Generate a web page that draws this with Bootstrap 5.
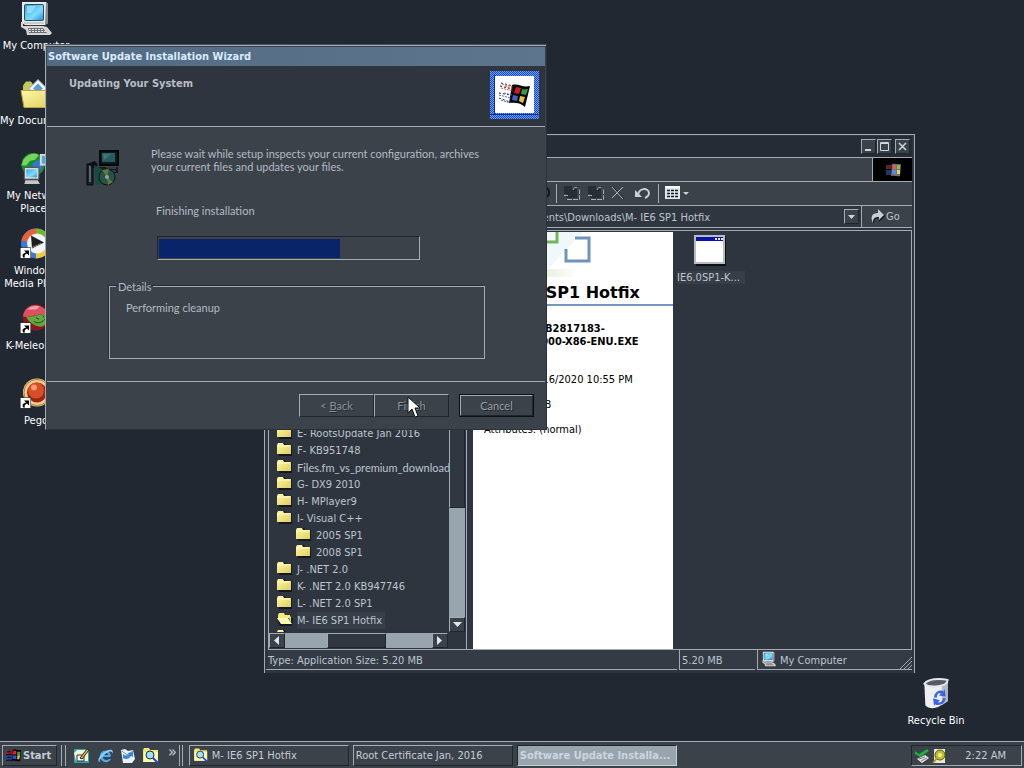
<!DOCTYPE html>
<html lang="en">
<head>
<meta charset="utf-8">
<meta name="viewport" content="width=device-width, initial-scale=1">
<title>Desktop</title>
<link href="https://cdn.jsdelivr.net/npm/bootstrap@5.3.0/dist/css/bootstrap.min.css" rel="stylesheet">
<style>
:root{--desk:#212832;--face:#3b424a;--pane:#2f353f;--hi:#a3abb4;--lo:#20262f;--ink:#bcc5cf;--track:#98a4ae}
body{font:11px/13px "DejaVu Sans Condensed","DejaVu Sans",sans-serif;color:var(--ink);background:var(--desk)}
svg{display:block;flex:none}
a{color:inherit;text-decoration:none}
button{font:inherit;color:inherit;border-radius:0}
.desktop{background:var(--desk)}
.shortcut{position:absolute;width:72px;color:#fff;text-align:center;white-space:nowrap}
.shortcut svg{margin:0 auto 4px}
.win{position:absolute;white-space:nowrap}
.raised{background:var(--face);border:1px solid;border-color:var(--hi) var(--lo) var(--lo) var(--hi);padding:0}
.sunken{border:1px solid;border-color:var(--lo) var(--hi) var(--hi) var(--lo)}
.rule-v{width:1px;align-self:stretch;background:var(--hi)}

/* file manager */
.explorer{left:264px;top:134px;width:651px;height:539px;background:#2e353e;border:1px solid var(--hi);border-bottom:0;padding:1px 2px 3px 3px}
.bar{background:var(--face);border-bottom:1px solid var(--hi);height:24px}
.titlebar{height:22px;background:#252c36;padding-right:2px}
.titlebar button{width:15px;height:15px}
.address{height:22px}
.address input{background:#30363f;border:0;color:inherit;font:inherit;text-align:right;padding:2px 134px 0 4px;min-width:0;height:21px}
.panes{border-top:1px solid var(--hi);border-right:1px solid var(--hi);border-bottom:1px solid var(--hi);background:var(--pane);margin-top:2px;padding-top:1px}
.folders{width:199px;border:1px solid var(--hi);border-width:0 1px 0 1px;margin-right:6px}
.tree{padding:193px 0 0 8px;margin:0;list-style:none}
.tree li{height:17px;line-height:17px;display:flex;gap:4px}
.tree .deep{margin-left:19px}
.tree .long{font-family:Lato,sans-serif}
.tree .picked span{background:#373e48;padding-right:3px;margin-right:auto}
.vscroll{width:16px;margin:0 1px 1px 0}
.track{background:var(--track)}
.sbtn{width:16px;height:15px;flex:none;display:flex;align-items:center;justify-content:center}
.preview{width:200px;background:#fff;color:#000;padding:52px 0 0 11px}
.preview svg{position:absolute;left:0;top:0}
.preview h1{font:bold 16px/18px "DejaVu Sans",sans-serif;margin:0 0 0 -11px;padding:0 0 2px 11px;border-bottom:2px solid #7397bd}
.preview p{margin:0 0 12px}
.item{width:74px;padding-top:3px}
.item svg{margin:0 auto 4px 21px}
.item span{background:#373e48;padding-right:5px}
.status{height:20px;background:#343b44;line-height:22px}
.status>div{border-bottom:1px solid var(--hi);padding-left:2px;height:20px}
.status>div+div{border-left:1px solid var(--hi);margin-left:2px}

/* wizard */
.wizard{left:45px;top:44px;width:502px;height:386px;background:var(--face);border:1px solid #2b313a;border-top-color:#4a525c;border-left-color:var(--hi);box-shadow:inset 0 1px var(--hi);padding:2px 1px 0;color:#b3bbc5;font-family:Lato,sans-serif}
.wtitle{height:19px;background:linear-gradient(90deg,#526a82,#5d768e);color:#d9ebff;padding:3px 0 0 1px;font:bold 11px/13px "DejaVu Sans Condensed",sans-serif}
.whead{height:61px;background:var(--pane);border-bottom:1px solid var(--hi)}
.whead h2{font:bold 11px/13px "DejaVu Sans Condensed",sans-serif;margin:11px 0 0 22px;color:#b8bdc4}
.wbody{height:255px;border-bottom:1px solid var(--hi)}
.meter{width:263px;height:24px;padding:2px 1px 1px;background:var(--face)}
.meter div{background:#0a246a;height:19px}
.wbody fieldset{border:1px solid var(--hi);box-shadow:-1px -1px #282e37;height:79px;margin:20px 0 0 62px;width:376px}
.wbody legend{float:none;width:auto;font:inherit;margin:0 0 0 6px;padding:0 2px;line-height:13px}
.wbtn{width:75px;height:23px}
.wbtn:disabled{color:#8a929b;text-shadow:1px 1px #242a32}
.default{outline:1px solid #0c1016;height:21px;width:73px;text-shadow:1px 1px #242a32;color:#98a0aa}
.pointer{position:absolute;left:361px;top:351px}

/* taskbar */
.taskbar{background:var(--face);border-top:1px solid var(--hi);height:27px;padding:3px 2px 2px;color:#c5ced7}
.start{width:55px;font-weight:bold}
.task{width:160px;text-align:left;white-space:nowrap;overflow:hidden}
.task.on{background:var(--track);border-color:var(--lo) #c5ccd3 #c5ccd3 var(--lo);font-weight:bold;color:#ccd6de}
.tray{width:111px}
</style>
</head>
<body>
<svg width="0" height="0" class="position-absolute" aria-hidden="true">
  <defs>
    <linearGradient id="scr" x1="0" y1="0" x2="1" y2="1"><stop offset="0" stop-color="#37a5e8"/><stop offset=".6" stop-color="#7fdcff"/><stop offset="1" stop-color="#2b8fd8"/></linearGradient>
    <linearGradient id="fold" x1="0" y1="0" x2="1" y2="1"><stop offset="0" stop-color="#fff9a8"/><stop offset="1" stop-color="#dfcf5e"/></linearGradient>
    <symbol id="pc" viewBox="0 0 32 33"><path d="M2 0h24l2 2v19l-3 2H5l-3-2z" fill="#ecebe8"/><path d="M26 0l2 2v19l-3 2z" fill="#858b92"/><rect x="4" y="2" width="20" height="17" rx="2" fill="#24506e"/><rect x="5" y="3" width="18" height="15" rx="1" fill="url(#scr)"/><path d="M7 4h9l-5 7H7z" fill="#b4eeff" opacity=".6"/><path d="M4 21h20" stroke="#aaa9a6"/><path d="M8 23h12l3 2H6z" fill="#3c4148"/><path d="M1 20h2v4h20l4 1 5 6-2 2H7l-1-5-5-3z" fill="#d6d5d3"/><path d="M8 26h15l4 5H9z" fill="#6d6e70"/><path d="M9 27.500h15M9 29.500h17" stroke="#e4e4e4" stroke-width="1" stroke-dasharray="2 1"/></symbol>
    <symbol id="docs" viewBox="0 0 32 32"><path d="M3 8l3-4h5l2 3v12H3z" fill="#c6c95a"/><path d="M9 11L18 2l9 9-9 9z" fill="#f4f8fd" stroke="#8aa0b8"/><path d="M13 11l5-5 5 5-5 4z" fill="#5c9fd4"/><path d="M1 13h30l-3 17H4z" fill="url(#fold)" stroke="#b9a544"/></symbol>
    <symbol id="net" viewBox="0 0 32 34"><circle cx="13" cy="13" r="12" fill="#1c8b38"/><path d="M3 8c5-7 12-7 16-5l-4 5-5 1-4 5H1z" fill="#76d35c"/><path d="M12 12l7-4 5 5-5 8-4-1z" fill="#3676c9"/><path d="M20 2h11v12H20z" fill="#d8d8d8"/><path d="M22 4h8v8h-8z" fill="#4da6de"/><path d="M4 16h15v12H4z" fill="#dadada" stroke="#555"/><path d="M6 18h11v8H6z" fill="url(#scr)"/><path d="M5 29h13l2 4H4z" fill="#c6c6c6"/></symbol>
    <symbol id="arrowbox" viewBox="0 0 11 11"><path d="M0 0h11v11H0z" fill="#fff" stroke="#000"/><path d="M3 10c-1-3 0-4 3-5L4 3h5v5L7 6c-2 1-3 2-2 4z" fill="#000"/></symbol>
    <symbol id="wmp" viewBox="0 0 32 32"><circle cx="16" cy="16" r="15" fill="#3f78d8"/><path d="M16 16V1a15 15 0 0 0-14.500 12z" fill="#e9603c"/><path d="M16 16V1a15 15 0 0 1 15 15z" fill="#70b92e"/><path d="M16 16h15a15 15 0 0 1-15 15z" fill="#f4c63a"/><circle cx="17" cy="16" r="10" fill="#f3f5f8"/><path d="M11 8l13 7-12 6z" fill="#1e1e1e"/><path d="M12 20l9-4" stroke="#888"/><use href="#arrowbox" x="0" y="20" width="11" height="11"/></symbol>
    <symbol id="kmel" viewBox="0 0 32 32"><circle cx="16" cy="15" r="13" fill="#8c1520"/><path d="M3 14C4 5 12 1 18 3s11 6 11 10c-9-4-18 3-26 1z" fill="#dc5162"/><path d="M7 7c4-4 9-4 13-3l-4 3z" fill="#f3a0aa"/><path d="M6 14c9 1 15-4 24-2-1 8-6 13-11 12S8 19 6 14z" fill="#63a83c"/><path d="M14 19c4 3 9 1 12-4M16 15l3 2M23 13l1 2" stroke="#1f4c18" fill="none"/><use href="#arrowbox" x="0" y="20" width="11" height="11"/></symbol>
    <symbol id="peg" viewBox="0 0 32 32"><circle cx="17" cy="15" r="14" fill="#f0cf92"/><circle cx="17" cy="15" r="13" fill="none" stroke="#b67b3c"/><circle cx="17" cy="15" r="10" fill="#9d2411"/><circle cx="16" cy="13" r="8" fill="#d84e26"/><circle cx="14" cy="10" r="3" fill="#f59a72"/><use href="#arrowbox" x="0" y="20" width="11" height="11"/></symbol>
    <symbol id="bin" viewBox="0 0 32 34"><path d="M4 7l1 22c3 4 10 4 15 1l8-5V5z" fill="#eeeff1"/><path d="M22 9l6-5v21l-6 4z" fill="#b4b8c2"/><path d="M4 7C8 2 19 1 28 3c0 7-19 9-24 4z" fill="#565b66" stroke="#e4e6ea" stroke-width="2"/><path d="M14 21c0-6 7-9 10-6l1-3 1 8-7-1 2-2c-3-1-4 1-4 4zM26 22c-1 7-8 8-11 6l-1 2-1-8 7 2-2 2c3 1 5-1 5-4z" fill="#3b63e4"/></symbol>
    <symbol id="fd" viewBox="0 0 16 16"><path d="M2 3l1-2h5l1 2h6v11H2z" fill="#15181c"/><path d="M0 3l1-2h5l1 2h7v9H0z" fill="url(#fold)"/><path d="M0 4h13" stroke="#fffcc8"/></symbol>
    <symbol id="fo" viewBox="0 0 16 16"><path d="M1 3l1-2h5l1 2h5v3h3l-1 8H3L1 10z" fill="#15181c"/><path d="M1 3l1-2h5l1 2h5v3H1z" fill="#f4e97a"/><path d="M0 6h11l4 6H4z" fill="#fffbb0"/><path d="M13 4l1 1v6l-2-5z" fill="#e5d866"/></symbol>
    <symbol id="flag" viewBox="0 0 18 16"><path d="M8 2c3-2 5 1 9 0l-1 12c-4 1-6-2-9 0z" fill="#050608"/><path d="M9 3c1-1 2 0 3 0v4H8z" fill="#d8232b"/><path d="M13 4h3v4h-3z" fill="#39a541"/><path d="M8 8h4v4c-1 0-3-1-4 0z" fill="#3454d6"/><path d="M13 8h3l-1 4h-2z" fill="#efc730"/><path d="M3 3h5v4H3z" fill="#8c1d26"/><path d="M2 8h5v4H2z" fill="#2340a8"/><path d="M1 3h2M0 6h3" stroke="#d8232b"/><path d="M1 9h2M0 12h3" stroke="#3454d6"/><path d="M2 4h4M1 7h6M2 10h4M1 13h6" stroke="#050608"/></symbol>
    <symbol id="find" viewBox="0 0 16 16"><path d="M0 2l1-2h5l1 2h8v12H0z" fill="#f0e679"/><path d="M1 4h14v10H1z" fill="#fbf6b0"/><circle cx="7" cy="7" r="4" fill="#9be2f5" stroke="#1b2a55"/><path d="M10 10l5 5" stroke="#2444c8" stroke-width="2"/></symbol>
  </defs>
</svg>

<div class="d-flex flex-column vh-100 overflow-hidden">
  <main class="desktop flex-grow-1 position-relative overflow-hidden">
    <a href="#" class="shortcut" style="left:0;top:2px"><svg width="32" height="33"><use href="#pc"/></svg>My Computer</a>
    <a href="#" class="shortcut" style="left:0;top:77px"><svg width="32" height="33"><use href="#docs"/></svg>My Documents</a>
    <a href="#" class="shortcut" style="left:0;top:152px"><svg width="32" height="33"><use href="#net"/></svg>My Network<br>Places</a>
    <a href="#" class="shortcut" style="left:0;top:227px"><svg width="32" height="33"><use href="#wmp"/></svg>Windows<br>Media Player</a>
    <a href="#" class="shortcut" style="left:0;top:302px"><svg width="32" height="33"><use href="#kmel"/></svg>K-Meleon 74</a>
    <a href="#" class="shortcut" style="left:0;top:377px"><svg width="32" height="33"><use href="#peg"/></svg>Pego</a>
    <a href="#" class="shortcut" style="left:900px;top:677px"><svg width="32" height="33"><use href="#bin"/></svg>Recycle Bin</a>

    <section class="win explorer d-flex flex-column" aria-label="M- IE6 SP1 Hotfix">
      <div class="bar titlebar d-flex align-items-center justify-content-end">
        <button class="raised" aria-label="Minimize"><svg width="13" height="13"><path d="M3 10h6" stroke="#cdd5dd" stroke-width="2"/></svg></button>
        <button class="raised" style="margin:0 3px 0 1px" aria-label="Maximize"><svg width="13" height="13"><path d="M2.500 2.500h8v8h-8zM2 3.500h9" fill="none" stroke="#cdd5dd"/></svg></button>
        <button class="raised" aria-label="Close"><svg width="13" height="13"><path d="M3 3l7 7M10 3l-7 7" stroke="#cdd5dd" stroke-width="1.500"/></svg></button>
      </div>
      <div class="bar d-flex justify-content-end">
        <div class="rule-v"></div>
        <svg width="39" height="23" style="background:#000"><g transform="translate(11 3)"><path d="M8 3c3-1 6 1 9 0l-1 12c-3 1-6-1-9 0z" fill="#6f7378"/><path d="M9 4h3v4H9z" fill="#e4574e"/><path d="M13 4h3v4h-3z" fill="#7bbe4c"/><path d="M8 9h4v4H8z" fill="#5b84e3"/><path d="M13 9h3v4h-3z" fill="#e8d54e"/><path d="M2 4h6v4H2z" fill="#5c242c"/><path d="M2 9h5v5H2z" fill="#27345f"/></g></svg>
      </div>
      <div class="bar">
        <svg width="430" height="23" aria-hidden="true"><path d="M288.500 2v19M390.500 2v19" stroke="#a3abb4"/><path d="M279 6c3 2 3 6 0 9" stroke="#14181e" fill="none" stroke-width="2"/>
          <g><path d="M296 4h8v3h5v9h-11v-4h-2z" fill="#262d37"/><path d="M296 13.500h4m-1 4h12.500v-10M305 8c1-3 3-3 5-2" fill="none" stroke="#a4acb6" stroke-dasharray="5 1"/></g>
          <g transform="translate(24)"><path d="M296 4h8v3h5v9h-11v-4h-2z" fill="#262d37"/><path d="M296 13.500h4m-1 4h12.500v-10M305 8c1-3 3-3 5-2" fill="none" stroke="#a4acb6" stroke-dasharray="5 1"/></g>
          <path d="M345 5l11 12" stroke="#12161c"/><path d="M344 5l11 12M355 5l-11 11" stroke="#b8c0c8"/>
          <path d="M370 13c1-7 10-8 11-2 0 3-2 4-4 5" fill="none" stroke="#c9d0d8" stroke-width="2"/><path d="M367 8v7h7z" fill="#c9d0d8"/>
          <path d="M397 4h15v13h-15z" fill="#e4e8ec"/><path d="M397 4h15v2h-15z" fill="#fff"/><path d="M399 8.500h12M399 11.500h12M399 14.500h12" stroke="#14181e" stroke-width="1.500" stroke-dasharray="3 1"/><path d="M415 10h6l-3 3z" fill="#c9d0d8"/></svg>
      </div>
      <div class="bar address d-flex align-items-stretch">
        <input class="flex-grow-1" type="text" aria-label="Address" value="C:\My Documents\Downloads\M- IE6 SP1 Hotfix">
        <div style="background:#30363f;width:17px" class="d-flex align-items-center"><button class="raised" aria-label="Show addresses"><svg width="13" height="13"><path d="M3 5h7l-3.500 4z" fill="#cdd5dd"/></svg></button></div>
        <div class="rule-v"></div>
        <a href="#" class="d-flex align-items-center ps-2" style="width:50px"><svg width="16" height="16"><path d="M4 15C1 9 3 5 9 5V1l6 6-6 6V9C5 9 4 11 4 15z" fill="#0f1318"/><path d="M3 14C0 8 2 4 8 4V0l6 6-5 5V8C4 8 3 10 3 14z" fill="#c7cfd7"/></svg>Go</a>
      </div>
      <div class="panes flex-grow-1 d-flex overflow-hidden">
        <nav class="folders d-flex flex-column flex-shrink-0" aria-label="Folders">
          <div class="d-flex flex-grow-1 overflow-hidden">
            <ul class="tree flex-grow-1 overflow-hidden" style="height:400px">
              <li><svg width="16" height="16"><use href="#fd"/></svg><span>E- RootsUpdate Jan 2016</span></li>
              <li><svg width="16" height="16"><use href="#fd"/></svg><span>F- KB951748</span></li>
              <li class="long"><svg width="16" height="16"><use href="#fd"/></svg><span>Files.fm_vs_premium_download</span></li>
              <li><svg width="16" height="16"><use href="#fd"/></svg><span>G- DX9 2010</span></li>
              <li><svg width="16" height="16"><use href="#fd"/></svg><span>H- MPlayer9</span></li>
              <li><svg width="16" height="16"><use href="#fd"/></svg><span>I- Visual C++</span></li>
              <li class="deep"><svg width="16" height="16"><use href="#fd"/></svg><span>2005 SP1</span></li>
              <li class="deep"><svg width="16" height="16"><use href="#fd"/></svg><span>2008 SP1</span></li>
              <li><svg width="16" height="16"><use href="#fd"/></svg><span>J- .NET 2.0</span></li>
              <li><svg width="16" height="16"><use href="#fd"/></svg><span>K- .NET 2.0 KB947746</span></li>
              <li><svg width="16" height="16"><use href="#fd"/></svg><span>L- .NET 2.0 SP1</span></li>
              <li class="picked"><svg width="16" height="16"><use href="#fo"/></svg><span>M- IE6 SP1 Hotfix</span></li>
              <li><svg width="16" height="16"><use href="#fd"/></svg></li>
            </ul>
            <div class="vscroll d-flex flex-column flex-shrink-0">
              <div class="raised flex-grow-1" style="background:#303740"></div>
              <div class="track" style="height:109px"></div>
              <button class="raised sbtn" aria-label="Scroll down"><svg width="9" height="6"><path d="M0 0h9L4.500 5z" fill="#dfe6ec"/></svg></button>
            </div>
          </div>
          <div class="d-flex" style="margin:0 18px 1px 0">
            <button class="raised sbtn" aria-label="Scroll left"><svg width="6" height="9"><path d="M5 0v9L0 4.500z" fill="#dfe6ec"/></svg></button>
            <div class="track" style="width:42px"></div>
            <div class="raised flex-grow-1" style="background:#303740"></div>
            <div class="track" style="width:46px"></div>
            <button class="raised sbtn" aria-label="Scroll right"><svg width="6" height="9"><path d="M0 0v9l5-4.500z" fill="#dfe6ec"/></svg></button>
          </div>
        </nav>
        <article class="preview position-relative flex-shrink-0">
          <svg width="200" height="60" aria-hidden="true"><defs><linearGradient id="mist" x1="0" y1="0" x2="1" y2="0"><stop offset="0" stop-color="#d6dfc0"/><stop offset="1" stop-color="#fff"/></linearGradient></defs><path d="M60 0h50L76 36H60z" fill="#f1f8fa"/><path d="M40 37h65v8H40z" fill="url(#mist)"/><path d="M60 10h24V0" fill="none" stroke="#75b35f" stroke-width="3"/><path d="M102 6h14v23H93V17" fill="none" stroke="#6d95bb" stroke-width="3"/></svg>
          <h1>M- IE6 SP1 Hotfix</h1>
          <p class="fw-bold" style="margin:16px 0 25px">IE6.0SP1-KB2817183-<br>Windows2000-X86-ENU.EXE</p>
          <p>Modified: 5/16/2020 10:55 PM</p>
          <p>Size: 5.20 MB</p>
          <p>Attributes: (normal)</p>
        </article>
        <div class="item">
          <svg width="33" height="32"><path d="M2 2h30v29H2z" fill="#0c0f13"/><path d="M0 0h31v29H0z" fill="#b7bcc0"/><path d="M2 6h27v21H2z" fill="#fff"/><path d="M2 2h27v4H2z" fill="#0b12a8"/><path d="M21 4h8" stroke="#e6e6e6" stroke-width="2" stroke-dasharray="2 1"/></svg>
          <span class="ms-1">IE6.0SP1-K...</span>
        </div>
      </div>
      <div class="status d-flex position-relative">
        <div class="flex-grow-1" style="margin-left:-2px">Type: Application Size: 5.20 MB</div>
        <div style="width:76px">5.20 MB</div>
        <div class="d-flex align-items-start gap-1 ps-1" style="width:155px"><svg width="14" height="18"><use href="#pc"/></svg>My Computer</div>
        <svg width="14" height="14" class="position-absolute end-0 bottom-0"><path d="M1 14L14 1M5 14l9-9M9 14l5-5" stroke="#a3abb4"/></svg>
      </div>
    </section>

    <section class="win wizard" role="dialog" aria-label="Software Update Installation Wizard">
      <div class="wtitle">Software Update Installation Wizard</div>
      <div class="whead d-flex justify-content-between">
        <h2>Updating Your System</h2>
        <svg width="49" height="48" style="margin:5px 6px 0 0"><defs><pattern id="dith" width="2" height="2" patternUnits="userSpaceOnUse"><path d="M0 0h2v2H0z" fill="#1c48c4"/><path d="M0 0h1v1H0zM1 1h1v1H1z" fill="#6fa0ee"/></pattern></defs><path d="M0 0h49v48H0z" fill="url(#dith)"/><path d="M0 43h49v1H0zM4 4h1v39H4z" fill="#0d2cae"/><path d="M5 5h39v37H5z" fill="#fff"/><path d="M22 14c7-2 10 3 18 1l-5 21c-4-4-9-5-16-4z" fill="#060606"/><path d="M26 16c2 0 3 1 5 1l-2 6-5-1z" fill="#c8202a"/><path d="M32 18c2 1 4 0 6 0l-2 6-5-1z" fill="#2fa03b"/><path d="M23 24l5 1-1 5-5-1z" fill="#4b5fc9"/><path d="M30 25l5 1-2 6-4-2z" fill="#e4c53c"/><path d="M11 12l12 3M10 15l12 3M9 22l12 2M9 27l11 4" stroke="#222" stroke-dasharray="2 2"/><path d="M12 13l11 3M11 17l12 3M15 15l8 3" stroke="#d05862" stroke-dasharray="2 1"/><path d="M9 24l12 3M11 29l9 3M14 22l8 2" stroke="#5868c8" stroke-dasharray="2 1"/></svg>
      </div>
      <div class="wbody">
        <div class="d-flex">
          <svg width="34" height="38" style="margin:23px 31px 0 39px"><path d="M14 1h18v14H14z" fill="#101820" stroke="#050709" stroke-width="2"/><path d="M16 3h13v9H16z" fill="#2a5b61"/><path d="M17 4h8l-7 6z" fill="#3d777a"/><path d="M12 17h20v6H20z" fill="#161b22"/><path d="M20 18h10M21 21h9" stroke="#4e5a66"/><path d="M1 14h6v21H1z" fill="#1b2128" stroke="#07090c"/><path d="M3 15h2v17H3z" fill="#596571"/><path d="M1 14l8-3 3 4-4 3z" fill="#0c1014"/><path d="M8 15l8 4 4 15-10 1z" fill="#164b3e"/><circle cx="21" cy="27" r="8" fill="#275247" stroke="#0b1413"/><path d="M21 27l-5-7 7-1zM21 27l6 5-5 3z" fill="#65783f"/><circle cx="21" cy="27" r="2" fill="#9aa5a2"/></svg>
          <p class="m-0" style="padding-top:20px">Please wait while setup inspects your current configuration, archives<br>your current files and updates your files.</p>
        </div>
        <div style="margin:16px 0 0 109px">Finishing installation</div>
        <div class="meter sunken" style="margin:19px 0 0 110px" role="progressbar" aria-label="Installation progress" aria-valuenow="70" aria-valuemin="0" aria-valuemax="100"><div style="width:70%"></div></div>
        <fieldset>
          <legend>Details</legend>
          <div style="margin:8px 0 0 16px">Performing cleanup</div>
        </fieldset>
      </div>
      <div class="d-flex justify-content-end" style="padding:12px 11px 0 0">
        <button class="raised wbtn" disabled>&lt; <u>B</u>ack</button>
        <button class="raised wbtn me-2" disabled>Finish</button>
        <button class="raised default" style="margin:1px 1px 0 3px">Cancel</button>
      </div>
      <svg class="pointer" width="13" height="22"><path d="M1 1v16l4-4 3 8 3-1-3-8h5z" fill="#fff" stroke="#111"/></svg>
    </section>
  </main>

  <footer class="taskbar d-flex align-items-stretch flex-shrink-0">
    <button class="raised start d-flex align-items-center"><svg width="17" height="15" style="margin:0 1px 0 2px"><use href="#flag"/></svg>Start</button>
    <div class="rule-v" style="margin:0 3px 0 4px"></div><div class="rule-v"></div>
    <nav class="d-flex align-items-center" style="gap:7px;margin-left:7px" aria-label="Quick launch">
      <a href="#" aria-label="Show desktop"><svg width="17" height="16"><path d="M1 1h15v14H1z" fill="#2aa7a5"/><path d="M1 5l3-3h9l2 3v8H3z" fill="#f5f1dd"/><path d="M4 7h7v6H4z" fill="#fff" stroke="#333"/><path d="M7 10l7-9 2 1-7 9z" fill="#e5b64b" stroke="#222" stroke-width="1"/></svg></a>
      <a href="#" aria-label="Internet Explorer"><svg width="16" height="16"><path d="M13 9H6c0 3 4 4 6 2h2c-2 5-11 4-11-3S13 1 14 8z" fill="#4ca9ee"/><path d="M6 7h5C11 4 6 4 6 7z" fill="#2e3b4c"/><path d="M2 14C-1 10 9 0 15 2c1 1 1 2 0 4 1-5-5-2-9 2-3 3-5 6-2 6z" fill="#8fd0fa"/></svg></a>
      <a href="#" aria-label="Outlook Express"><svg width="16" height="16"><path d="M1 2l4-1 3 2 5-1 2 9-3 4H3z" fill="#e9f3fd"/><path d="M2 3l5 4 6-4" fill="none" stroke="#5a8fcd"/><path d="M3 10c3 2 6 1 8-2l2 1V4L8 5l1 1c-2 2-4 2-6 0z" fill="#3f83dc"/></svg></a>
      <a href="#" aria-label="Search"><svg width="16" height="16"><use href="#find"/></svg></a>
      <a href="#" aria-label="More" style="font-size:16px;margin:-8px 0 0 2px">»</a>
    </nav>
    <div class="rule-v" style="margin:0 2px 0 2px"></div><div class="rule-v"></div>
    <nav class="d-flex flex-grow-1" style="gap:4px;padding-left:6px" aria-label="Open windows">
      <button class="raised task d-flex align-items-center gap-1 ps-1"><svg width="14" height="15"><use href="#find"/></svg>M- IE6 SP1 Hotfix</button>
      <button class="raised task" style="padding-left:2px">Root Certificate Jan, 2016</button>
      <button class="raised task on" style="padding-left:2px">Software Update Installa...</button>
    </nav>
    <div class="tray sunken d-flex align-items-center" style="padding-left:2px">
      <svg width="16" height="16"><path d="M1 3l4 3 8-5 2 2-9 6-5-3z" fill="#1fae44"/><path d="M3 11l8-4 4 3-7 5z" fill="#e6e9ec"/><path d="M5 11l6-2M7 13l6-3" stroke="#777"/></svg>
      <svg width="14" height="16" style="margin-left:2px"><path d="M2 1h11v14H2z" fill="#e8e8dd"/><circle cx="8" cy="7" r="5" fill="#c4bd30" stroke="#5c5a12"/><circle cx="8" cy="7" r="2" fill="#f0ee9a"/><path d="M5 10l-4 5" stroke="#a29b20" stroke-width="2"/></svg>
      <span class="ms-auto" style="padding-right:15px">2:22 AM</span>
    </div>
  </footer>
</div>
<script src="https://cdn.jsdelivr.net/npm/bootstrap@5.3.0/dist/js/bootstrap.bundle.min.js"></script>
</body>
</html>
